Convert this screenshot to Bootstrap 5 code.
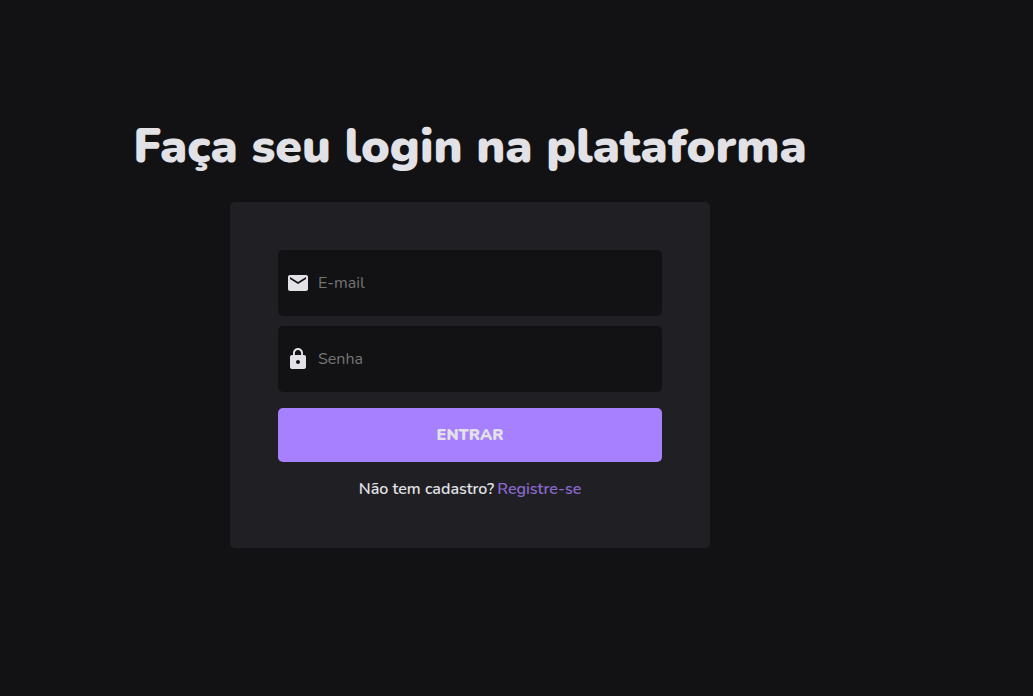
<!DOCTYPE html>
<html lang="pt-BR">
<head>
<meta charset="utf-8">
<meta name="viewport" content="width=device-width, initial-scale=1">
<title>Login</title>
<link href="https://cdn.jsdelivr.net/npm/bootstrap@5.3.0/dist/css/bootstrap.min.css" rel="stylesheet">
<style>
body { background: #121214; color: #e1e1e6; font-family: Nunito, Lato, sans-serif; }
.login-page { padding: 112px 9% 0 0; }
.login-title { font-size: 48px; font-weight: 900; line-height: 68px; margin-bottom: 22px; }
.login-card { width: 100%; max-width: 480px; background: #202024; border-radius: 5px; }
.field-list { gap: 10px; }
.field { height: 66px; background: #121214; border-radius: 5px; padding: 0 8px; gap: 8px; }
.field:focus-within { outline: 1px solid #a780ff; }
.field .form-control, .field .form-control:focus { background: transparent; border: 0; box-shadow: none; color: #e1e1e6; font-size: 16px; line-height: 22px; padding: 0; }
.field .form-control::placeholder { color: #757575; opacity: 1; }
.btn-enter, .btn-enter:hover, .btn-enter:active { height: 54px; background: #a780ff; color: #e1e1e6; border: 0; border-radius: 5px; font-size: 16px; line-height: 22px; font-weight: 900; }
.signup { gap: 3px; font-size: 16px; line-height: 22px; font-weight: 600; }
.signup a { color: #8a68cf; }
</style>
</head>
<body>
<main class="login-page d-flex flex-column align-items-center">
  <h1 class="login-title text-center">Faça seu login na plataforma</h1>
  <form class="login-card p-5">
    <div class="field-list d-grid mb-3">
      <div class="field d-flex align-items-center">
        <label for="email" class="d-flex" aria-label="E-mail"><svg width="24" height="24" viewBox="0 0 24 24" fill="#e1e1e6"><path d="M20 4H4c-1.1 0-2 .9-2 2v12c0 1.1.9 2 2 2h16c1.1 0 2-.9 2-2V6c0-1.1-.9-2-2-2zm0 4-8 5-8-5V6l8 5 8-5v2z"/></svg></label>
        <input id="email" type="email" class="form-control" placeholder="E-mail">
      </div>
      <div class="field d-flex align-items-center">
        <label for="senha" class="d-flex" aria-label="Senha"><svg width="24" height="24" viewBox="0 0 24 24" fill="#e1e1e6"><path d="M18 8h-1V6c0-2.76-2.24-5-5-5S7 3.24 7 6v2H6c-1.1 0-2 .9-2 2v10c0 1.1.9 2 2 2h12c1.1 0 2-.9 2-2V10c0-1.1-.9-2-2-2zm-6 9c-1.1 0-2-.9-2-2s.9-2 2-2 2 .9 2 2-.9 2-2 2zm3.1-9H8.9V6c0-1.71 1.39-3.1 3.1-3.1s3.1 1.39 3.1 3.1v2z"/></svg></label>
        <input id="senha" type="password" class="form-control" placeholder="Senha">
      </div>
    </div>
    <button type="submit" class="btn btn-enter w-100 mb-3">ENTRAR</button>
    <p class="signup d-flex flex-wrap justify-content-center mb-0"><span>Não tem cadastro?</span> <a href="#" class="text-decoration-none">Registre-se</a></p>
  </form>
</main>
<script src="https://cdn.jsdelivr.net/npm/bootstrap@5.3.0/dist/js/bootstrap.bundle.min.js"></script>
</body>
</html>
